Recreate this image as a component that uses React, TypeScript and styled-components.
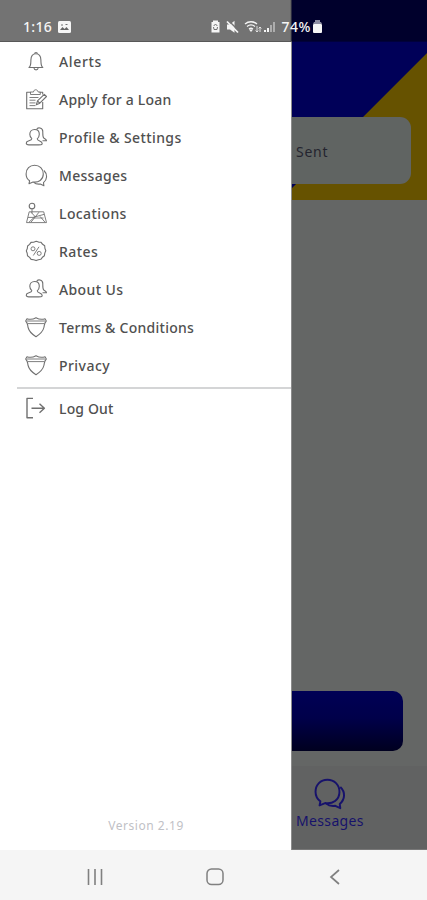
import React from "react";
import styled, { createGlobalStyle } from "styled-components";

const GlobalStyle = createGlobalStyle`
  * { box-sizing: border-box; }
  body { margin: 0; font-family: "Noto Sans", "Open Sans", sans-serif; }
`;

const Screen = styled.div`
  width: 427px;
  height: 900px;
  display: grid;
  grid-template-rows: 42px 808px 50px;
  overflow: hidden;
  background: #fff;
`;

const StatusBar = styled.header`
  display: flex;
  align-items: flex-start;
  justify-content: space-between;
  padding: 16px 104px 0 23px;
  border-bottom: 1px solid;
  border-image: linear-gradient(to right, #585858 0 292px, #00003b 292px) 1;
  background: linear-gradient(to right, #737373 0 290px, #565656 291px, #00002c 292px);
  color: #f5f5f5;
`;

const StatusGroup = styled.div<{ $gap: number }>`
  display: flex;
  align-items: center;
  height: 21px;
  gap: ${(p) => p.$gap}px;
`;

const StatusText = styled.span<{ $spacing: number }>`
  font-size: 14px;
  line-height: 21px;
  font-weight: 500;
  letter-spacing: ${(p) => p.$spacing}px;
  white-space: nowrap;
`;

const Body = styled.div`
  display: grid;
  grid-template-columns: 292px 135px;
`;

const Drawer = styled.aside`
  display: flex;
  flex-direction: column;
  background: #fff;
  border-right: 1px solid #8c8c8c;
  padding-top: 1px;
`;

const MenuList = styled.nav`
  display: flex;
  flex-direction: column;
`;

const MenuRow = styled.a`
  display: flex;
  align-items: center;
  height: 37.9px;
  padding-left: 25px;
  gap: 11px;
  color: #707070;
`;

const MenuLabel = styled.span<{ $spacing: number }>`
  padding-top: 1px;
  font-size: 14px;
  line-height: 20px;
  font-weight: 500;
  color: #505050;
  letter-spacing: ${(p) => p.$spacing}px;
  white-space: nowrap;
`;

const Divider = styled.hr`
  width: 274px;
  height: 2px;
  margin: 3px 0 1px 17px;
  border: 0;
  background: #d4d5d6;
`;

const Version = styled.footer`
  margin: auto 0 14px;
  padding-left: 1px;
  text-align: center;
  font-size: 12px;
  line-height: 20px;
  letter-spacing: 0.55px;
  color: #bfc1c6;
`;

const Backdrop = styled.main`
  display: flex;
  flex-direction: column;
  background: #646665;
`;

const Hero = styled.section`
  height: 158px;
  padding: 75px 16px 0 0;
  background: linear-gradient(135deg, #000058 0 49.7%, #665200 50%);
`;

const SentCard = styled.div`
  height: 67px;
  padding: 25px 0 0 4px;
  border-radius: 0 11px 11px 0;
  background: #606462;
  color: #24242f;
  font-size: 14px;
  line-height: 20px;
  letter-spacing: 0.75px;
`;

const ActionButton = styled.div`
  width: 111px;
  height: 60px;
  margin-top: 491px;
  border-radius: 0 10px 10px 0;
  background: linear-gradient(#000055, #00004a 45%, #00001f);
`;

const BottomTab = styled.div`
  display: flex;
  flex-direction: column;
  flex: 1;
  margin-top: 15px;
  padding: 12px 0 0 4px;
  background: #616262;
  border-bottom: 1px solid #787878;
  color: #17126b;
`;

const TabIcon = styled.div`
  height: 33px;
  padding-left: 18px;
`;

const TabLabel = styled.span`
  font-size: 14px;
  line-height: 20px;
  letter-spacing: 0.35px;
`;

const SystemNav = styled.footer`
  display: grid;
  grid-template-columns: repeat(3, 120px);
  place-items: center;
  background: #f5f5f5;
  padding: 3px 0 0 35px;
  color: #808080;
`;

type IconName = "bell" | "apply" | "people" | "chat" | "location" | "rates" | "shield" | "logout";

const glyphs: Record<IconName, React.ReactNode> = {
  bell: (
    <>
      <path d="M4 17.5c2.1-1.5 1.8-4.2 1.9-7.5.1-4 2-6.2 5-6.2s4.9 2.2 5 6.2c.1 3.3-.2 6 1.9 7.5Z" />
      <path d="M9.5 3.7c.2-1.6 2.8-1.6 3 0M8.9 17.8c.3 2.8 4 2.8 4.3 0" />
    </>
  ),
  apply: (
    <>
      <path d="M6 4.2H1.7v16.6h16V14M14.5 4.2h3.2v2.3" />
      <path d="M5.5 6.5V4h3c.2-3 4.2-3 4.6 0h2.2v2.5ZM4.5 9.5h9M4.5 12.2h6M4.5 14.9h6M4.5 17.6h6" strokeWidth=".9" />
      <path d="m11.3 16.8 1.2-3.9 6.8-6.5 2.2 2.1-6.7 6.7ZM12.5 13l2.2 2.1" />
    </>
  ),
  people: (
    <>
      <path d="M9.6 3.5c3 0 4.7 2 4.7 4.8 0 1.8-.8 3.4-2.1 4.5.3 2.8 5 1.5 5 4.7 0 1.7-2.4 1.4-5.5 1.4H3.8c-3.4 0-3.1-3-.6-3.8 2-.7 3.5-1 3.6-2.4-1.2-1-2-2.5-2-4.4 0-2.8 1.8-4.8 4.8-4.8Z" />
      <path d="M11.7 3.5c.8-2.4 6.1-2.2 6.1 2.2 0 3.2-.2 5.2 1 6.4 1.4.8 2.7 1.2 2.7 2.6h-4" />
    </>
  ),
  chat: (
    <>
      <path d="m4.6 16.8-.6 2.9 4-1.7c5.4.9 10.3-2.3 10.3-7.9 0-5.3-3.7-8.8-8.7-8.8-4.9 0-8.5 3.5-8.5 8.6 0 2.9 1.3 5.3 3.5 6.9Z" />
      <path d="M18.9 6.5c3.8 3.6 3.5 8.8-.4 12.2l.4 3-3.6-1.7c-2.5.3-5-.2-6.5-1.6" />
    </>
  ),
  location: (
    <>
      <circle cx="7" cy="4" r="2.8" />
      <path d="M7 6.8v4.5M4.2 9.8h14.5l2.8 10.8h-20ZM3 15.4h5l11-3M6 10.2l4 4.3-6 5.7M14 10.2l-8 10M15 14.4l5 5.8" strokeWidth=".9" />
      <path d="M8.5 16h10" strokeWidth=".8" />
    </>
  ),
  rates: (
    <>
      <path d="m11.2 1.2 2.4.9 2.5.2 1.5 2 2.1 1.5.2 2.5.9 2.4-1 2.4-.4 2.6-2 1.6-1.6 2-2.4.4-2.3.9-2.4-.9-2.6-.3-1.5-2-2.1-1.6-.3-2.5-.9-2.4 1-2.4.3-2.5 2-1.6L6 2.4l2.6-.2Z" />
      <circle cx="8" cy="8.8" r="2" strokeWidth=".9" />
      <circle cx="14.2" cy="13.4" r="2" strokeWidth=".9" />
      <path d="m14 6.8-5.7 8.7" strokeWidth=".9" />
    </>
  ),
  shield: (
    <>
      <path d="M2 2.7c3 1 6 .7 9-1 3 1.7 6 2 9 1L21.3 5c-2 1.8-1.7 3.4-2.4 6.5-1 4.2-4.2 6.9-7.9 9.2-3.7-2.3-6.9-5-7.9-9.2C2.4 8.4 2.7 6.8.7 5Z" />
      <path d="M2.6 7.6h16.8M2 5h18" strokeWidth=".9" />
    </>
  ),
  logout: <path d="M8 1.4H2v19.3h6M6.5 11.2h13M14.5 6.7l4.9 4.5-4.9 4.5" />,
};

function Icon({ name, size = 23, weight = 1.1 }: { name: IconName; size?: number; weight?: number }) {
  return (
    <svg width={size} height={size} viewBox="0 0 23 23" fill="none" stroke="currentColor" strokeWidth={weight} strokeLinejoin="round">
      {glyphs[name]}
    </svg>
  );
}

const items: { label: string; icon: IconName; spacing: number }[] = [
  { label: "Alerts", icon: "bell", spacing: 0.65 },
  { label: "Apply for a Loan", icon: "apply", spacing: 0.22 },
  { label: "Profile & Settings", icon: "people", spacing: 0.4 },
  { label: "Messages", icon: "chat", spacing: 0.3 },
  { label: "Locations", icon: "location", spacing: 0.4 },
  { label: "Rates", icon: "rates", spacing: 0.45 },
  { label: "About Us", icon: "people", spacing: 0.38 },
  { label: "Terms & Conditions", icon: "shield", spacing: 0.26 },
  { label: "Privacy", icon: "shield", spacing: 0.45 },
];

function StatusIcons() {
  return (
    <svg width="67" height="16" viewBox="0 0 67 16" fill="currentColor">
      <path d="M2 3V1.5h5V3h1.5v10.5h-8V3Z" />
      <path d="m2.7 7 1.8-2 1.8 2M6.5 8 6 10.5H3L2.5 8" fill="none" stroke="#737373" strokeWidth="1" />
      <path d="M16 5.5h3l4.5-3.7v12L19 10.5h-3Z" />
      <path d="m17.5 1.5 11 11" stroke="#737373" strokeWidth="1.5" />
      <path d="m16 2.5 11 11" stroke="currentColor" strokeWidth="1.7" />
      <g fill="none" stroke="currentColor" strokeWidth="1.3">
        <path d="M34 5c3.5-3 8.5-3 12 0M36 7.5c2.5-2 5.5-2 8 0M38 10c1.3-1 2.7-1 4 0" />
        <path d="M46 7v6m-1.4-1.5L46 13l1.4-1.5M49 13V8m-1.4 1.5L49 8l1.4 1.5" strokeWidth=".8" />
      </g>
      <path d="m38 10.5 2 2.5 2-2.5Z" />
      <path d="M53 11h2v2h-2Zm3-2h2v4h-2Z" />
      <path d="M59 6h2v7h-2Zm3-3h2v10h-2Z" opacity=".45" />
    </svg>
  );
}

export default function App() {
  return (
    <>
      <GlobalStyle />
      <Screen>
        <StatusBar>
          <StatusGroup $gap={6}>
            <StatusText $spacing={0.3}>1:16</StatusText>
            <svg width="13" height="12" viewBox="0 0 13 12">
              <rect width="13" height="12" rx="1.5" fill="currentColor" />
              <path d="m2 9 2.5-3 2 2 2-2 2.5 3Z" fill="#666" />
              <path d="M3 4h2M7.5 3.5h2" stroke="#737373" />
            </svg>
          </StatusGroup>
          <StatusGroup $gap={4}>
            <StatusIcons />
            <StatusGroup $gap={1}>
              <StatusText $spacing={0.5}>74%</StatusText>
              <svg width="11" height="13" viewBox="0 0 11 13">
                <path d="M3 2V0h5v2h1l1 2H1l1-2Z" fill="#8d8da2" />
                <rect x="1" y="4" width="9" height="9" rx="1" fill="currentColor" />
              </svg>
            </StatusGroup>
          </StatusGroup>
        </StatusBar>
        <Body>
          <Drawer>
            <MenuList>
              {items.map((item) => (
                <MenuRow key={item.label}>
                  <Icon name={item.icon} />
                  <MenuLabel $spacing={item.spacing}>{item.label}</MenuLabel>
                </MenuRow>
              ))}
            </MenuList>
            <Divider />
            <MenuRow>
              <Icon name="logout" weight={1.4} />
              <MenuLabel $spacing={0.15}>Log Out</MenuLabel>
            </MenuRow>
            <Version>Version 2.19</Version>
          </Drawer>
          <Backdrop>
            <Hero>
              <SentCard>Sent</SentCard>
            </Hero>
            <ActionButton />
            <BottomTab>
              <TabIcon>
                <Icon name="chat" size={32} weight={1.4} />
              </TabIcon>
              <TabLabel>Messages</TabLabel>
            </BottomTab>
          </Backdrop>
        </Body>
        <SystemNav>
          <svg width="18" height="18" viewBox="0 0 18 18" stroke="currentColor" strokeWidth="1.6">
            <path d="M2.5 1v16M9 1v16M15.5 1v16" />
          </svg>
          <svg width="20" height="18" viewBox="0 0 20 18" fill="none" stroke="currentColor" strokeWidth="1.5">
            <rect x="2" y="1" width="16" height="15.5" rx="4.5" />
          </svg>
          <svg width="18" height="18" viewBox="0 0 18 18" fill="none" stroke="currentColor" strokeWidth="1.7">
            <path d="m13 2-8 7 8 7" />
          </svg>
        </SystemNav>
      </Screen>
    </>
  );
}
